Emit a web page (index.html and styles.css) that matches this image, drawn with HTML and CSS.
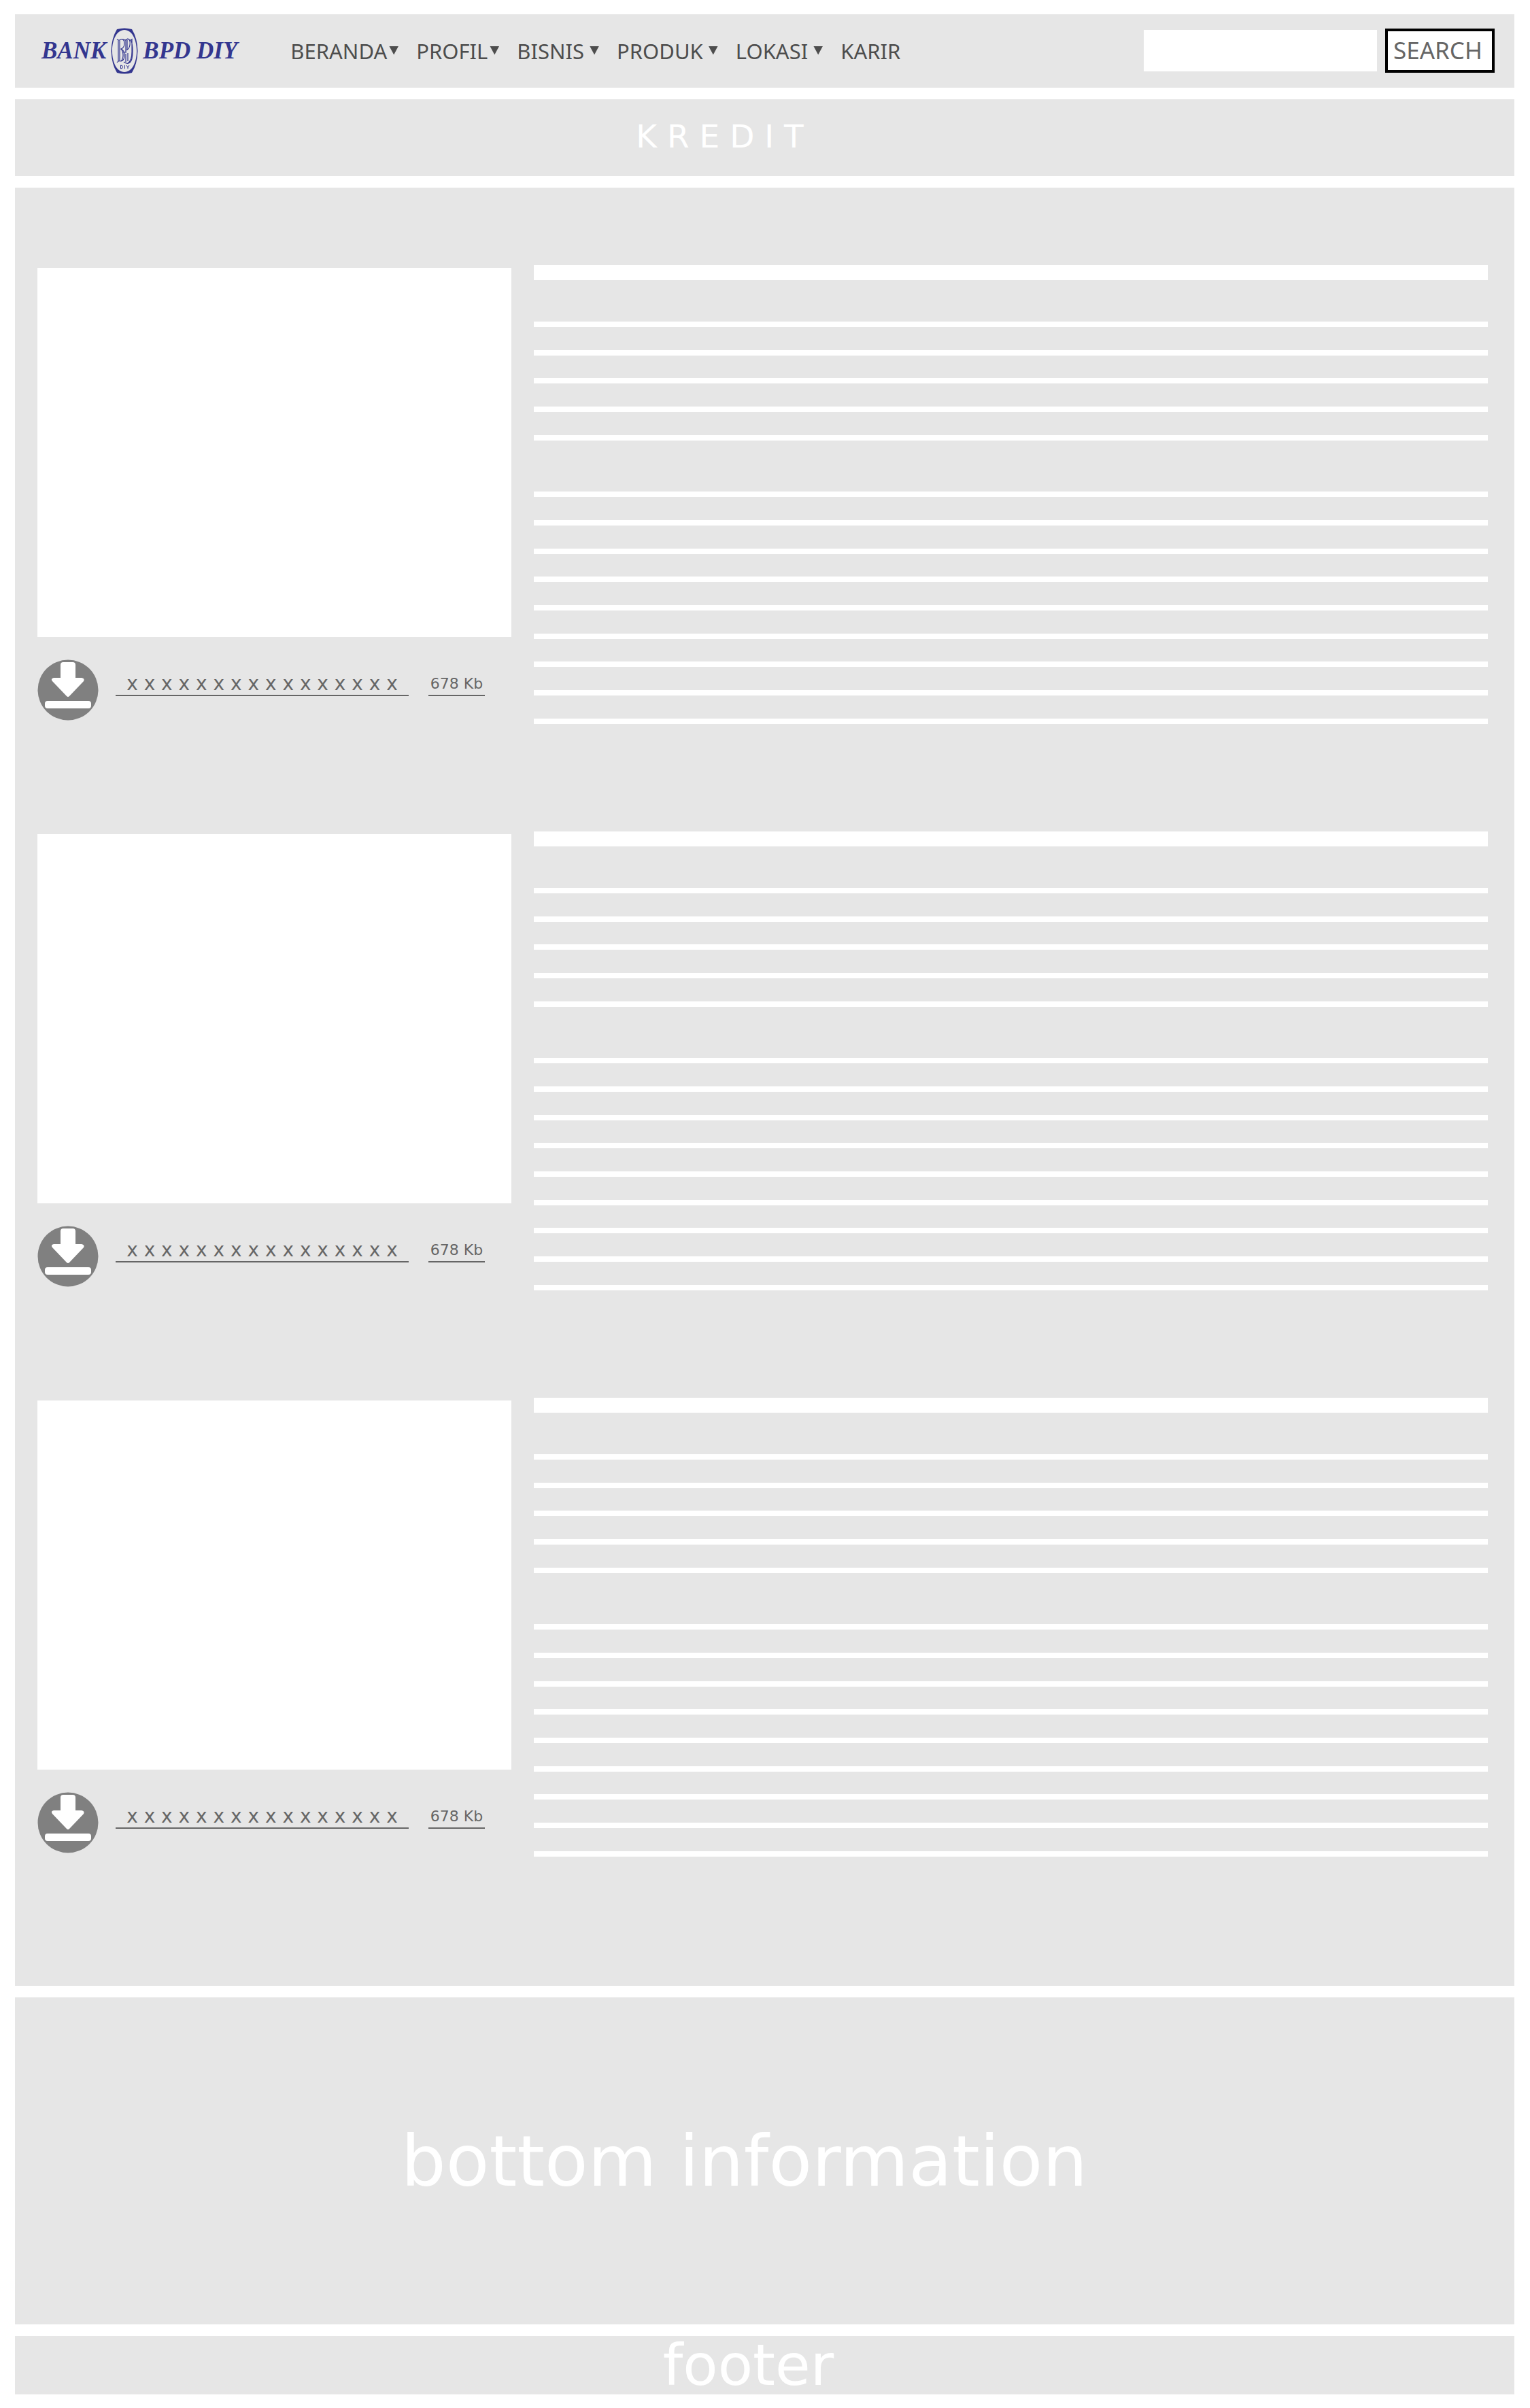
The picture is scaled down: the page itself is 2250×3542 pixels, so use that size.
FILE: index.html
```html
<!DOCTYPE html>
<html lang="id">
<head>
<meta charset="utf-8">
<meta name="viewport" content="width=device-width, initial-scale=1">
<title>Bank BPD DIY - Kredit</title>
<link rel="stylesheet" href="styles.css">
</head>
<body>
<svg class="sprite" aria-hidden="true">
  <symbol id="download" viewBox="0 0 90 90">
    <circle cx="45" cy="45" r="44.500" fill="#808080"/>
    <path fill="#fff" d="M38 4h14q4 0 4 4v19h9q5 1 3 5L47 54q-2 2-4 0L22 32q-3-4 2-5h10V8q0-4 4-4z"/>
    <rect x="11" y="61" width="68" height="11" rx="4" fill="#fff"/>
  </symbol>
</svg>
<header class="panel topbar">
  <a class="brand" href="#">
    <span>BANK</span>
    <svg class="emblem" viewBox="0 0 40 68" aria-hidden="true">
      <path fill="#33368f" fill-rule="evenodd" d="M9 2Q20-1 31 2Q39 15 39.500 34Q39 53 31 66Q20 69 9 66Q1 53 .5 34Q1 15 9 2zM20 3C9 3 2 17 2 34S9 65 20 65 38 51 38 34 31 3 20 3z"/>
      <g fill="none" stroke="#33368f" stroke-width="1.200">
        <path d="M9 17q3 2 6 0q5-1 5 6q0 6-5 8q5 2 5 9q0 9-6 9q-3-1-5 2M11 18v31M13 18v31"/>
        <path d="M15 31q3 3 3 9t-3 9M18 17q4 2 7-1q4 1 3 9q-1 7-6 8M22 18v18M24 18v14"/>
        <path d="M19 50q5 4 9 1q4-3 4-17q0-12-3-16M26 17q3 2 5 0v18q0 13-6 17M17 36h6M22 38v12M25 37v12"/>
      </g>
      <g fill="none" stroke="#33368f">
        <path d="M14.500 55v5q3 0 3-2.500t-3-2.500M20.500 55v5M23 55l2 3 2-3M25 58v2"/>
      </g>
    </svg>
    <span>BPD DIY</span>
  </a>
  <nav class="menu" aria-label="Menu utama">
    <a class="menu-link has-sub snug" href="#">BERANDA</a>
    <a class="menu-link has-sub snug" href="#">PROFIL</a>
    <a class="menu-link has-sub" href="#">BISNIS</a>
    <a class="menu-link has-sub" href="#">PRODUK</a>
    <a class="menu-link has-sub" href="#">LOKASI</a>
    <a class="menu-link" href="#">KARIR</a>
  </nav>
  <form class="search">
    <input class="search-box" type="search" aria-label="Search">
    <button class="search-button" type="submit">SEARCH</button>
  </form>
</header>
<div class="panel title"><h1>K R E D I T</h1></div>
<main class="panel content">
  <article class="product">
    <div class="media">
      <div class="thumb"></div>
      <a class="download" href="#">
        <svg class="download-icon" aria-hidden="true"><use href="#download"/></svg>
        <span class="file-name">x x x x x x x x x x x x x x x x</span>
        <span class="file-size">678 Kb</span>
      </a>
    </div>
    <div class="copy">
      <div class="heading"></div>
      <div class="lines"><i></i><i></i><i></i><i></i><i></i><i class="blank"></i><i></i><i></i><i></i><i></i><i></i><i></i><i></i><i></i><i></i></div>
    </div>
  </article>
  <article class="product">
    <div class="media">
      <div class="thumb"></div>
      <a class="download" href="#">
        <svg class="download-icon" aria-hidden="true"><use href="#download"/></svg>
        <span class="file-name">x x x x x x x x x x x x x x x x</span>
        <span class="file-size">678 Kb</span>
      </a>
    </div>
    <div class="copy">
      <div class="heading"></div>
      <div class="lines"><i></i><i></i><i></i><i></i><i></i><i class="blank"></i><i></i><i></i><i></i><i></i><i></i><i></i><i></i><i></i><i></i></div>
    </div>
  </article>
  <article class="product">
    <div class="media">
      <div class="thumb"></div>
      <a class="download" href="#">
        <svg class="download-icon" aria-hidden="true"><use href="#download"/></svg>
        <span class="file-name">x x x x x x x x x x x x x x x x</span>
        <span class="file-size">678 Kb</span>
      </a>
    </div>
    <div class="copy">
      <div class="heading"></div>
      <div class="lines"><i></i><i></i><i></i><i></i><i></i><i class="blank"></i><i></i><i></i><i></i><i></i><i></i><i></i><i></i><i></i><i></i></div>
    </div>
  </article>
</main>
<section class="panel info"><p>bottom information</p></section>
<footer class="panel footer"><p>footer</p></footer>
</body>
</html>
```
FILE: styles.css
```css
* { box-sizing: border-box; }

body {
  margin: 0;
  padding: 21px 23px 20px 22px;
  display: flex;
  flex-direction: column;
  gap: 17px;
  background: #fff;
  color: #4d4d4d;
  font-family: "DejaVu Sans", Verdana, sans-serif;
}

h1, p { margin: 0; font-weight: 400; }
a { color: inherit; text-decoration: none; }

.sprite { display: none; }
.panel { background: #e6e6e6; }

.topbar {
  display: flex;
  align-items: center;
  min-height: 108px;
  padding: 0 29px 0 39px;
}

.brand {
  display: flex;
  align-items: center;
  gap: 7px;
  margin-right: 78px;
  color: #33368f;
  font: italic 700 35px/40px "Liberation Serif", "Times New Roman", serif;
}
.emblem { width: 40px; height: 68px; }

.menu {
  display: flex;
  gap: 26px;
  font: 31px/44px "Noto Sans", Tahoma, sans-serif;
}
.menu-link { display: flex; align-items: center; gap: 8px; }
.snug { gap: 3px; }
.has-sub::after {
  content: "";
  width: 14px;
  height: 13px;
  margin-bottom: 2px;
  background: #4d4d4d;
  clip-path: polygon(0 0, 100% 0, 50% 100%);
}

.search {
  display: flex;
  align-items: center;
  gap: 12px;
  margin: 0 0 2px auto;
}
.search-box {
  width: 343px;
  height: 61px;
  padding: 0 12px;
  border: 0;
  border-radius: 0;
  background: #fff;
  font: inherit;
}
.search-button {
  width: 161px;
  height: 65px;
  padding: 0 0 0 8px;
  border: 4px solid #000;
  background: #fff;
  color: #666;
  font: 35px/44px "Noto Sans", Tahoma, sans-serif;
  text-align: left;
}

.title {
  min-height: 113px;
  display: grid;
  place-items: center;
  padding: 0 132px 4px 0;
  color: #fff;
}
.title h1 { font-size: 47px; line-height: 54px; }

.content {
  display: flex;
  flex-direction: column;
  gap: 158px;
  padding: 114px 39px 190px 33px;
}

.product {
  display: grid;
  grid-template-columns: 697fr 1403fr;
  gap: 33px;
}
.thumb { height: 543px; margin-top: 4px; background: #fff; }

.download {
  display: flex;
  align-items: center;
  margin-top: 33px;
  color: #666;
}
.download-icon { width: 90px; height: 90px; margin-right: 25px; }
.file-name, .file-size {
  height: 34px;
  margin-bottom: 16px;
  line-height: 32px;
  border-bottom: 2px solid #666;
  text-align: center;
  white-space: nowrap;
}
.file-name { width: 431px; margin-right: 29px; font-size: 28px; }
.file-size { width: 83px; font-size: 22px; }

.heading { height: 22px; margin-bottom: 61px; background: #fff; }
.lines {
  display: flex;
  flex-direction: column;
  justify-content: space-between;
  height: 592px;
}
.lines i { height: 8px; background: #fff; }
.lines .blank { background: none; }

.info {
  min-height: 481px;
  display: grid;
  place-items: center;
  padding-right: 60px;
  color: #fff;
  font-size: 104px;
  line-height: 120px;
}

.footer {
  min-height: 86px;
  display: grid;
  place-items: center;
  padding-right: 48px;
  color: #fff;
  font-size: 84px;
  line-height: 84px;
}
```
